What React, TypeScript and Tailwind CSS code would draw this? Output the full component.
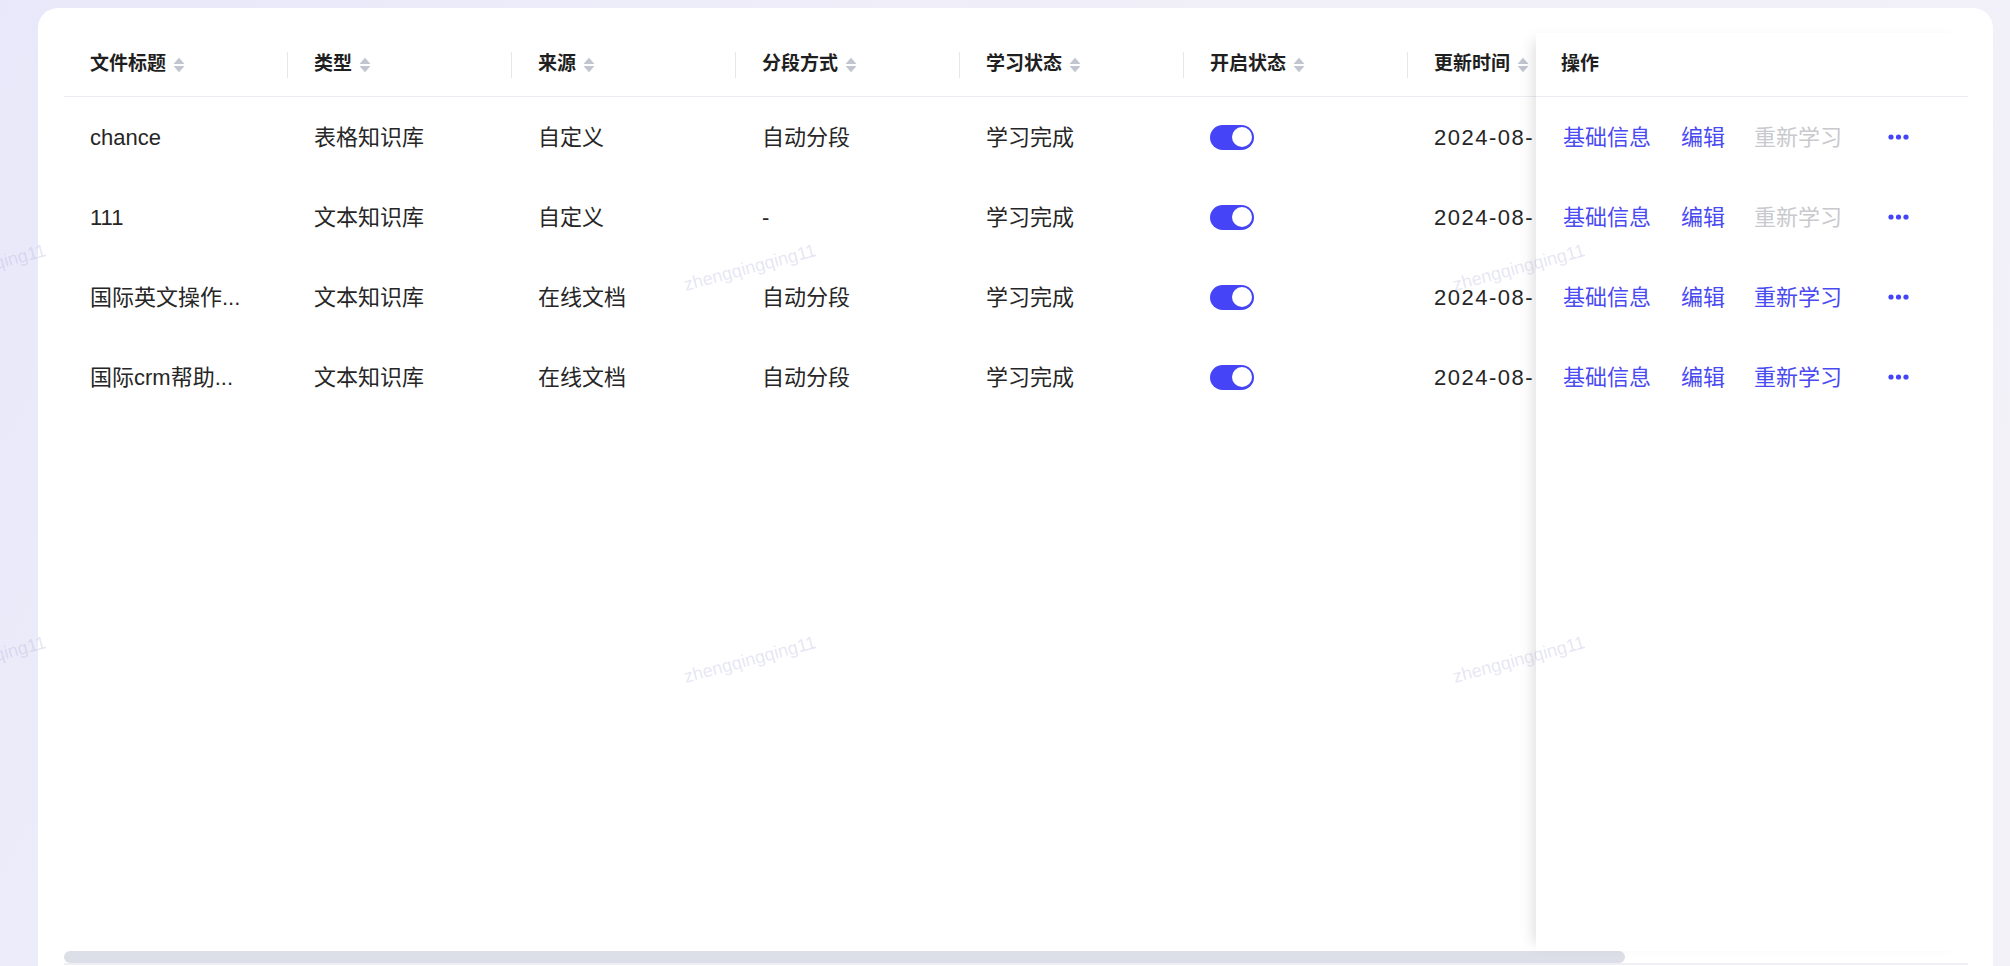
import React from 'react';

type Row = {
  title: string;
  type: string;
  source: string;
  split: string;
  status: string;
  time: string;
  relearn: boolean;
};

const columns = ['文件标题', '类型', '来源', '分段方式', '学习状态', '开启状态', '更新时间'];

const rows: Row[] = [
  { title: 'chance', type: '表格知识库', source: '自定义', split: '自动分段', status: '学习完成', time: '2024-08-21 10:32:15', relearn: false },
  { title: '111', type: '文本知识库', source: '自定义', split: '-', status: '学习完成', time: '2024-08-20 18:05:42', relearn: false },
  { title: '国际英文操作...', type: '文本知识库', source: '在线文档', split: '自动分段', status: '学习完成', time: '2024-08-16 09:41:07', relearn: true },
  { title: '国际crm帮助...', type: '文本知识库', source: '在线文档', split: '自动分段', status: '学习完成', time: '2024-08-15 14:22:36', relearn: true },
];

const marks = [
  { left: -20, top: 268 },
  { left: 750, top: 268 },
  { left: 1519, top: 268 },
  { left: -20, top: 660 },
  { left: 750, top: 660 },
  { left: 1519, top: 660 },
];

const font = { fontFamily: '"Liberation Sans", "Noto Sans CJK SC", sans-serif' };

function SortIcon() {
  return (
    <svg width="12" height="16" viewBox="0 0 12 16" className="ml-[7px] shrink-0">
      <path d="M6 0.8 L11.5 7 L0.5 7 Z" fill="#c2c5cd" />
      <path d="M0.5 9 L11.5 9 L6 15.2 Z" fill="#c2c5cd" />
    </svg>
  );
}

function Toggle() {
  return (
    <div className="flex h-[25px] w-[44px] items-center justify-end rounded-full bg-[#4545f7] px-[2.5px]">
      <div className="h-[20px] w-[20px] rounded-full bg-white" />
    </div>
  );
}

function MoreIcon() {
  return (
    <svg width="22" height="6" viewBox="0 0 22 6" className="ml-[46px]">
      <circle cx="3" cy="3" r="2.6" fill="#4545f7" />
      <circle cx="10.5" cy="3" r="2.6" fill="#4545f7" />
      <circle cx="18" cy="3" r="2.6" fill="#4545f7" />
    </svg>
  );
}

export default function App() {
  return (
    <div
      className="relative h-[966px] w-[2010px] overflow-hidden bg-[linear-gradient(120deg,#e9e8fa_0%,#f0eff8_45%,#f3f2f9_100%)] pl-[38px] pr-[17px] pt-[8px]"
      style={font}
    >
      <div className="h-[980px] rounded-t-[20px] bg-white pl-[26px] pr-[25px] pt-[25px]">
        <div className="flex h-[932px] flex-col">
          <div className="flex min-h-0 flex-1">
            {/* scrolling part, clipped by the fixed column */}
            <div className="min-w-0 flex-1 overflow-hidden">
              <div className="w-[1472px]">
                <div className="flex h-[64px] border-b border-[#ececf2]">
                  {columns.map((c, i) => (
                    <div
                      key={c}
                      className={`relative flex items-center px-[26px] text-[19px] font-semibold text-[#1f1f1f] ${i === 6 ? 'w-[128px] overflow-hidden whitespace-nowrap pr-0' : 'w-[224px]'}`}
                    >
                      {c}
                      <SortIcon />
                      {i < 6 && <span className="absolute right-0 top-1/2 h-[26px] w-px -translate-y-1/2 bg-[#e6e7ec]" />}
                    </div>
                  ))}
                </div>
                {rows.map((r, idx) => (
                  <div key={idx} className="flex h-[80px] items-center text-[22px] text-[#262626]">
                    <div className="w-[224px] whitespace-nowrap px-[26px]">{r.title}</div>
                    <div className="w-[224px] px-[26px]">{r.type}</div>
                    <div className="w-[224px] px-[26px]">{r.source}</div>
                    <div className="w-[224px] px-[26px]">{r.split}</div>
                    <div className="w-[224px] px-[26px]">{r.status}</div>
                    <div className="w-[224px] px-[26px]">
                      <Toggle />
                    </div>
                    <div className="w-[128px] pl-[26px]">
                      <span className="block w-[100px] overflow-hidden whitespace-nowrap tracking-[1.5px]">{r.time}</span>
                    </div>
                  </div>
                ))}
              </div>
            </div>

            {/* fixed action column */}
            <div className="relative z-10 w-[432px] shrink-0 bg-white shadow-[-10px_0_14px_-8px_rgba(0,0,0,0.14)]">
              <div className="flex h-[64px] items-center border-b border-[#ececf2] px-[25px] text-[19px] font-semibold text-[#1f1f1f]">
                操作
              </div>
              {rows.map((r, idx) => (
                <div key={idx} className="flex h-[80px] items-center px-[27px] text-[22px]">
                  <span className="text-[#4a4af2]">基础信息</span>
                  <span className="ml-[30px] text-[#4a4af2]">编辑</span>
                  <span className={`ml-[29px] ${r.relearn ? 'text-[#4a4af2]' : 'text-[#c9c9ce]'}`}>重新学习</span>
                  <MoreIcon />
                </div>
              ))}
            </div>
          </div>

          {/* horizontal scrollbar */}
          <div className="h-[14px] border-b-2 border-[#eeeef4]">
            <div className="h-[12px] w-[1561px] rounded-full bg-[#dcdfe7]" />
          </div>
        </div>
      </div>

      {/* watermark */}
      <div className="pointer-events-none absolute inset-0 z-20">
        {marks.map((m, i) => (
          <span
            key={i}
            className="absolute -translate-x-1/2 -translate-y-1/2 -rotate-[15deg] whitespace-nowrap text-[18px] text-[rgba(170,170,215,0.3)]"
            style={{ left: m.left, top: m.top }}
          >
            zhengqingqing11
          </span>
        ))}
      </div>
    </div>
  );
}
